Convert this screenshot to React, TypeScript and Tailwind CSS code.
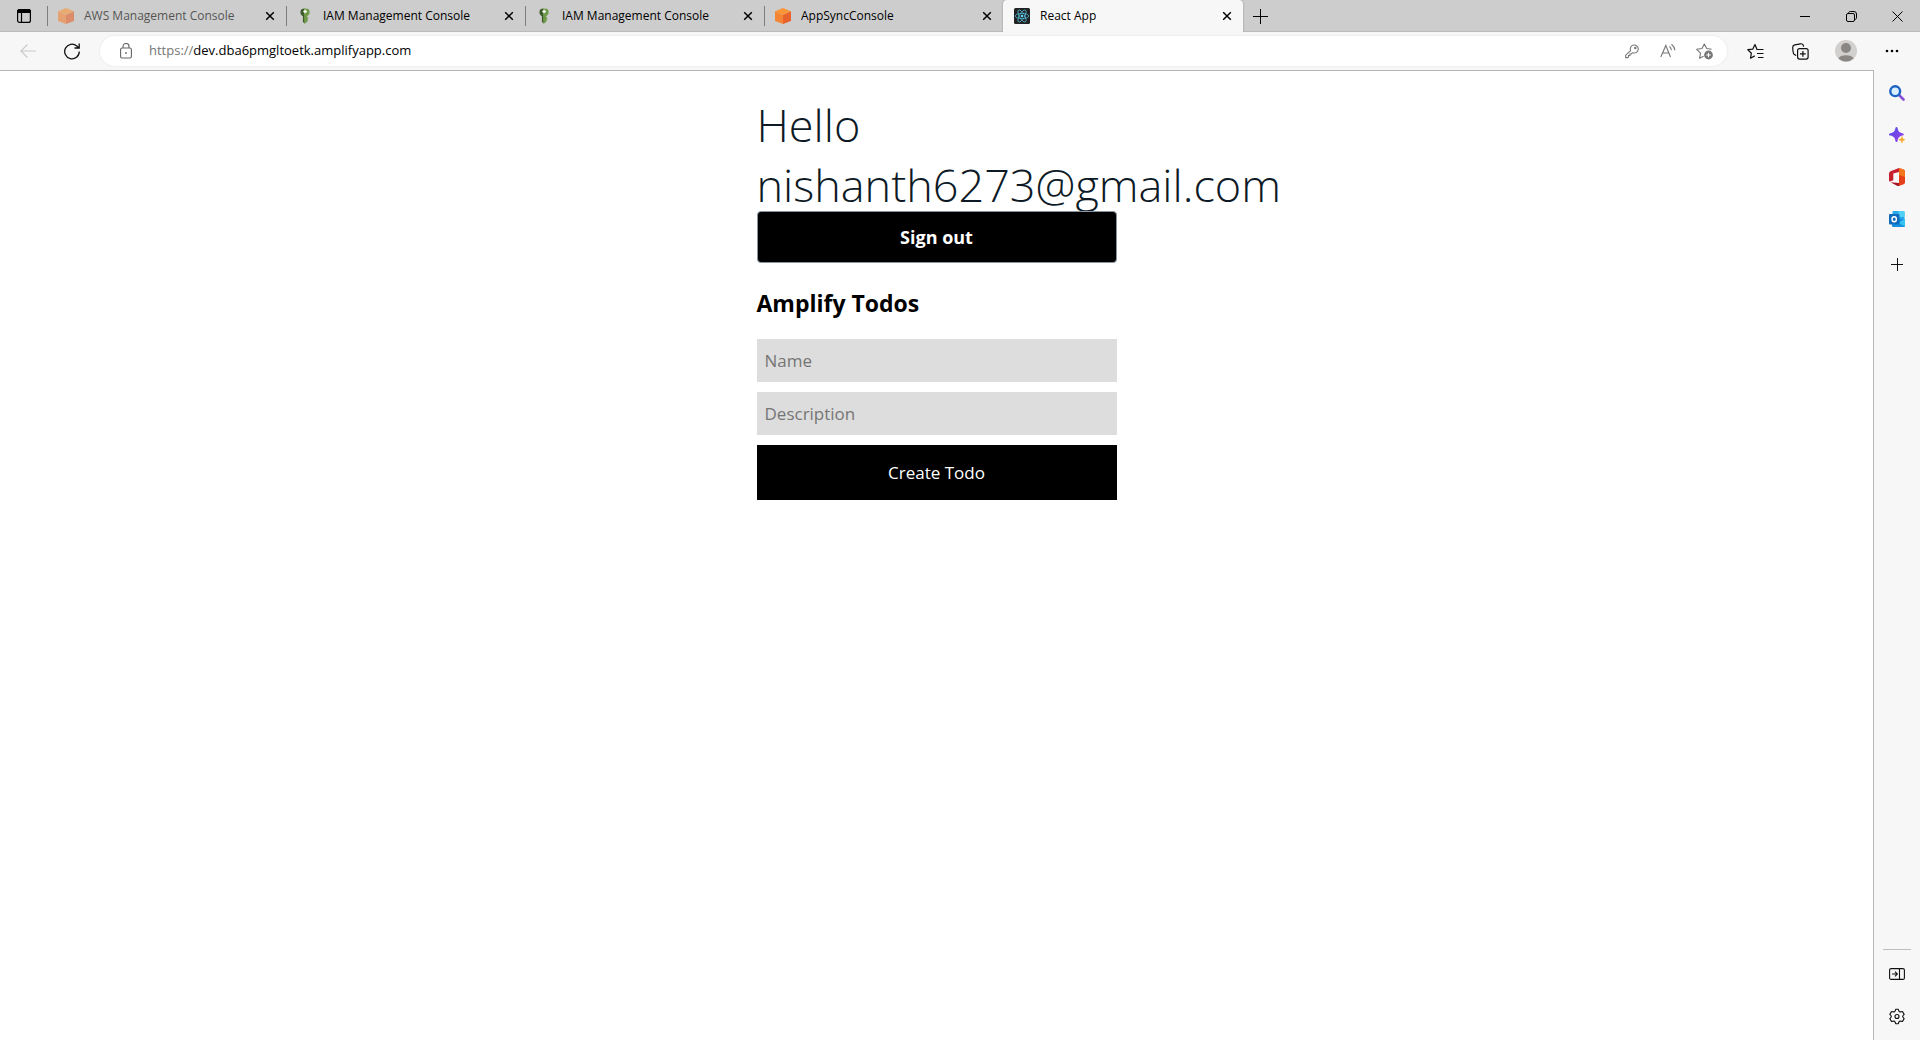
import React, { ReactNode } from "react";

function CloseGlyph() {
  return (
    <svg width="10" height="10" viewBox="0 0 10 10" stroke="#000" strokeWidth="1.5" aria-hidden="true">
      <path d="M1.2 1.2l7.6 7.6M8.8 1.2L1.2 8.8" />
    </svg>
  );
}

function CubeIcon() {
  return (
    <svg width="16" height="16" viewBox="0 0 16 16" aria-hidden="true">
      <path d="M8 0l8 3.2L8 7 0 3.2z" fill="#fa9638" />
      <path d="M0 3.2L8 7v9L0 13z" fill="#f58536" />
      <path d="M16 3.2L8 7v9l8-3z" fill="#e8622b" />
    </svg>
  );
}

function KeyIcon() {
  return (
    <svg width="16" height="16" viewBox="0 0 16 16" aria-hidden="true">
      <path d="M7.500.5L4.700 1 3.500 3v2.600L4.700 7.500l1.200.4V14l2 1.500z" fill="#3c5a28" />
      <path d="M7 .5L11 .8 12.500 2.500v3.200L11.100 7.500l-.8.4v1.300l1.300 1-1.200 1 .8 1.100-1 1L10 14l-2 1.600H7.300V7z" fill="#6f9a48" />
      <path d="M6.300 3.500h3.600M8.100 1.700v3.600" stroke="#fff" strokeWidth="1.300" />
    </svg>
  );
}

function ReactIcon() {
  return (
    <svg width="16" height="16" viewBox="0 0 16 16" fill="none" stroke="#53b5cf" strokeWidth=".8" aria-hidden="true">
      <rect width="16" height="16" rx="1.500" fill="#222" stroke="none" />
      <ellipse cx="8" cy="8" rx="6.800" ry="2.600" />
      <ellipse cx="8" cy="8" rx="6.800" ry="2.600" transform="rotate(60 8 8)" />
      <ellipse cx="8" cy="8" rx="6.800" ry="2.600" transform="rotate(120 8 8)" />
      <circle cx="8" cy="8" r="1.300" fill="#61dafb" stroke="none" />
    </svg>
  );
}

type TabProps = { title: string; icon: ReactNode; active?: boolean; faded?: boolean };

function Tab({ title, icon, active, faded }: TabProps) {
  return (
    <div
      className={
        active
          ? "flex h-8 max-w-60 flex-1 items-center rounded-t bg-[#f7f7f7] pr-2 pl-[11px] shadow-[0_0_2px_rgba(0,0,0,0.35)]"
          : "flex h-5 max-w-[239px] flex-1 items-center border-l border-[#7d7d7d] pr-2 pl-2.5"
      }
    >
      <button className={faded ? "flex min-w-0 flex-1 items-center gap-2.5 text-left opacity-60" : "flex min-w-0 flex-1 items-center gap-2.5 text-left"}>
        {icon}
        <span className="truncate text-xs">{title}</span>
      </button>
      <button aria-label={"Close " + title} className="flex size-4 items-center justify-center">
        <CloseGlyph />
      </button>
    </div>
  );
}

function TabBar() {
  return (
    <div className="flex h-8 items-center bg-[#cdcdcd] shadow-[inset_0_-1px_0_#bababa]">
      <button aria-label="Tab actions" className="flex w-[47px] justify-center">
        <svg width="16" height="16" viewBox="0 0 16 16" fill="none" stroke="#000" strokeWidth="1.200" aria-hidden="true">
          <rect x="1.600" y="1.600" width="12.800" height="12.800" rx="2" />
          <path d="M1.600 3.500a2 2 0 0 1 2-2h8.800a2 2 0 0 1 2 2V4.500H1.600z" fill="#000" />
          <path d="M5.500 5v9.400" />
        </svg>
      </button>
      <Tab title="AWS Management Console" icon={<CubeIcon />} faded />
      <Tab title="IAM Management Console" icon={<KeyIcon />} />
      <Tab title="IAM Management Console" icon={<KeyIcon />} />
      <Tab title="AppSyncConsole" icon={<CubeIcon />} />
      <Tab title="React App" icon={<ReactIcon />} active />
      <button aria-label="New tab" className="ml-[9px] flex size-4 items-center justify-center">
        <svg width="15" height="15" viewBox="0 0 15 15" stroke="#000" strokeWidth="1" aria-hidden="true">
          <path d="M0 7.500h15M7.500 0v15" />
        </svg>
      </button>
      <div className="ml-auto flex">
        <button aria-label="Minimize" className="flex h-8 w-[46px] items-center justify-center">
          <svg width="10" height="11" viewBox="0 0 10 11" stroke="#000" aria-hidden="true"><path d="M0 5.500h10" /></svg>
        </button>
        <button aria-label="Restore" className="flex h-8 w-[46px] items-center justify-center">
          <svg width="11" height="11" viewBox="0 0 11 11" fill="none" stroke="#000" aria-hidden="true">
            <rect x=".5" y="2.500" width="8" height="8" rx="1.500" />
            <path d="M2.500 2.300C2.600 1 3.300.5 4.300.5H8A2.500 2.500 0 0 1 10.500 3v3.800c0 1-.6 1.600-1.800 1.700" />
          </svg>
        </button>
        <button aria-label="Close" className="flex h-8 w-[46px] items-center justify-center">
          <svg width="11" height="11" viewBox="0 0 11 11" stroke="#000" aria-hidden="true"><path d="M.5.5l10 10M10.500.5l-10 10" /></svg>
        </button>
      </div>
    </div>
  );
}

function AddressBar() {
  return (
    <div className="flex h-[38px] items-center bg-[#f7f7f7]">
      <button aria-label="Back" disabled className="ml-5 flex size-4 items-center justify-center">
        <svg width="16" height="14" viewBox="0 0 16 14" fill="none" stroke="#cacaca" strokeWidth="1.100" aria-hidden="true">
          <path d="M16 7H.8M7.500.5L.8 7l6.700 6.500" />
        </svg>
      </button>
      <button aria-label="Refresh" className="ml-7 flex size-4 items-center justify-center">
        <svg width="16" height="17" viewBox="0 0 16 17" fill="none" stroke="#111" strokeWidth="1.300" aria-hidden="true">
          <path d="M15.300 8.500A7.300 7.300 0 1 1 12.800 3L15 5M15.200.5V5h-4.700" />
        </svg>
      </button>
      <div className="ml-5 flex h-[30px] flex-1 items-center rounded-full bg-white pr-3.5 pl-5 shadow-[0_0_3px_rgba(0,0,0,0.08)]">
        <svg width="12" height="16" viewBox="0 0 12 16" fill="none" stroke="#666" strokeWidth="1.100" aria-hidden="true">
          <rect x=".6" y="5" width="10.800" height="10" rx="1.500" />
          <path d="M3 5V3.500a3 3 0 0 1 6 0V5" />
          <rect x="5.200" y="9.200" width="1.600" height="1.600" fill="#666" stroke="none" />
        </svg>
        <a href="https://dev.dba6pmgltoetk.amplifyapp.com" className="ml-[17px] flex-1 text-[13px] text-black">
          <span className="text-[#767676]">https://</span>dev.dba6pmgltoetk.amplifyapp.com
        </a>
        <div className="flex items-center gap-5 text-[#767676]">
          <button aria-label="Saved passwords">
            <svg width="16" height="16" viewBox="0 0 16 16" fill="none" stroke="currentColor" strokeWidth="1.100" aria-hidden="true">
              <path d="M6.600 7.600A4 4 0 1 1 9 9.800l-.9.100-.8 1.100H6v1.500H4.600V14l-1 .6H1.700v-2.400z" />
              <circle cx="11.300" cy="5" r=".7" />
            </svg>
          </button>
          <button aria-label="Read aloud">
            <svg width="16" height="16" viewBox="0 0 16 16" fill="none" stroke="currentColor" strokeWidth="1.100" aria-hidden="true">
              <path d="M.8 14L5.800 2.500 10.500 14M2.500 10h6.300M9.500 3.300a6 6 0 0 1 1.900 4M11.500 1.300a9 9 0 0 1 3.400 6" />
            </svg>
          </button>
          <button aria-label="Add to favorites">
            <svg width="17" height="17" viewBox="0 0 17 17" fill="none" stroke="currentColor" strokeWidth="1.100" strokeLinejoin="round" aria-hidden="true">
              <path d="M15.600 6.300l-4.900-.8L8.300 1 6 5.500l-5.300.8 3.800 3.800-.9 5.200 4-2" />
              <circle cx="12.500" cy="12" r="4.400" fill="currentColor" stroke="none" />
              <path d="M12.500 9.700v4.600M10.200 12h4.600" stroke="#fff" />
            </svg>
          </button>
        </div>
      </div>
      <button aria-label="Favorites" className="ml-5">
        <svg width="17" height="17" viewBox="0 0 17 17" fill="none" stroke="#111" strokeWidth="1.200" strokeLinejoin="round" aria-hidden="true">
          <path d="M16.500 6.500H10L8 1.500 5.700 6.200.8 6.700l3.600 3.500-.9 5 4.200-2.300M10 10.500h6.500M11 14.500h5.500" />
        </svg>
      </button>
      <button aria-label="Collections" className="ml-7">
        <svg width="17" height="17" viewBox="0 0 17 17" fill="none" stroke="#111" strokeWidth="1.200" aria-hidden="true">
          <rect x="5.600" y="5.600" width="10.500" height="10.500" rx="2" />
          <path d="M10.900 8v5.700M8 10.900h5.700M4.200 12.500L2 11.200C1.200 10.500.8 7 .7 4.500c0-1.500.7-2.300 2-2.600L8.500.8c1.500-.2 2.400.4 2.800 1.500l.3 1.300" />
        </svg>
      </button>
      <button aria-label="Profile" className="ml-[26px]">
        <svg width="22" height="22" viewBox="0 0 22 22" aria-hidden="true">
          <circle cx="11" cy="11" r="11" fill="#d2d0ce" />
          <circle cx="11" cy="8" r="5" fill="#8a8684" />
          <path d="M3.500 18.500a7.800 4.500 0 0 1 15 0 11 11 0 0 1-15 0z" fill="#8a8684" />
        </svg>
      </button>
      <button aria-label="Settings and more" className="mr-[21px] ml-7">
        <svg width="14" height="4" viewBox="0 0 14 4" aria-hidden="true">
          <circle cx="2" cy="2" r="1.300" /><circle cx="7" cy="2" r="1.300" /><circle cx="12" cy="2" r="1.300" />
        </svg>
      </button>
    </div>
  );
}

function Sidebar() {
  return (
    <aside className="flex w-[46px] flex-col items-center bg-[#f7f7f7] pt-[15px] pb-[15px]">
      <div className="flex flex-col items-center gap-[26px]">
        <button aria-label="Search">
          <svg width="16" height="16" viewBox="0 0 16 16" fill="none" aria-hidden="true">
            <path d="M10.500 10.500l4 4" stroke="#8a4fd8" strokeWidth="2.600" strokeLinecap="round" />
            <circle cx="6.200" cy="6.200" r="4.900" fill="#d9efff" stroke="#1b62c4" strokeWidth="2.400" />
          </svg>
        </button>
        <button aria-label="Discover">
          <svg width="16" height="16" viewBox="0 0 16 16" aria-hidden="true">
            <defs><linearGradient id="spark" x1="0" y1="0" x2="1" y2="1"><stop stopColor="#4a50f0" /><stop offset="1" stopColor="#a43be0" /></linearGradient></defs>
            <path d="M7.500 0c.6 0 .9.400 1.100 1.200.7 3.200 1.600 4.200 4.800 5 .9.200 1.300.6 1.300 1.200s-.4.900-1.300 1.100c-3.200.9-4.100 1.900-4.800 5.200-.2.900-.5 1.300-1.100 1.300s-.9-.4-1.100-1.300c-.7-3.300-1.700-4.300-5-5.200C.4 8.300 0 8 0 7.400s.4-1 1.400-1.200c3.300-.8 4.300-1.800 5-5C6.600.4 6.900 0 7.500 0z" fill="url(#spark)" />
            <path d="M13 9.500c.4 2.200.9 2.700 3 3.200-2.100.5-2.600 1.100-3 3.300-.5-2.200-1-2.800-3.200-3.300 2.200-.5 2.700-1 3.200-3.200z" fill="#f5aa28" stroke="#f5aa28" strokeWidth=".6" />
          </svg>
        </button>
        <button aria-label="Office">
          <svg width="16" height="18" viewBox="0 0 16 18" className="-my-px" aria-hidden="true">
            <path d="M10 0L1.500 3.300Q0 4 0 5.500v7q0 .8 1 1l3.300-1.200V5.500L10 4z" fill="#c81f2e" />
            <path d="M10 0l4.600 1.600Q16 2 16 3.500v11q0 1.300-1.300 1.800L10 18z" fill="#e5401a" />
            <path d="M10 0l4.600 1.600Q16 2 16 3.500V9L10 7z" fill="#f5761c" />
            <path d="M1.500 14.300L10 15v3L8.500 18z" fill="#a81522" />
          </svg>
        </button>
        <button aria-label="Outlook">
          <svg width="16" height="16" viewBox="0 0 16 16" aria-hidden="true">
            <rect x="3.500" width="12" height="12" rx="1" fill="#28a8ea" />
            <path d="M9.500 0h5q1 0 1 1v5h-6z" fill="#50d0f5" />
            <path d="M3 8h12.500L16 15q0 1-1 1H4q-1 0-1-1z" fill="#1490df" />
            <path d="M16 7.500v8L9.500 12z" fill="#36c2f2" />
            <rect y="3" width="10.500" height="10.500" rx="1" fill="#0f6cbd" />
            <ellipse cx="5.200" cy="8.200" rx="2.200" ry="2.500" fill="none" stroke="#fff" strokeWidth="1.400" />
          </svg>
        </button>
      </div>
      <button aria-label="Add" className="mt-[31px]">
        <svg width="12" height="13" viewBox="0 0 12 13" stroke="#111" aria-hidden="true"><path d="M0 6.500h12M6.500 0v13" /></svg>
      </button>
      <div className="mt-auto flex flex-col items-center">
        <div className="mb-4 h-px w-7 bg-[#bdbdbd]" />
        <button aria-label="Hide sidebar">
          <svg width="16" height="16" viewBox="0 0 16 16" fill="none" stroke="#111" strokeWidth="1.100" aria-hidden="true">
            <rect x=".6" y="2.600" width="14.800" height="10.800" rx="1.500" />
            <path d="M10.500 2.600v10.800M3 8h5M6 5.700L8.300 8 6 10.300" />
          </svg>
        </button>
        <button aria-label="Settings" className="mt-[26px]">
          <svg width="16" height="17" viewBox="0 0 24 24" fill="none" stroke="#111" strokeWidth="1.700" strokeLinejoin="round" aria-hidden="true">
            <path d="M10 1.200h4q.8 2.900 1.700 3.600 1.200.7 4.500-.2l2.500 4.200Q20.500 11 20.500 12t2.200 3.200l-2.500 4.200q-3.300-.9-4.500-.2-.9.700-1.700 3.600h-4q-.8-2.900-1.700-3.600-1.200-.7-4.500.2l-2.500-4.200Q3.500 13 3.500 12T1.300 8.800l2.500-4.200q3.300.9 4.500.2.900-.7 1.700-3.600z" />
            <circle cx="12" cy="12" r="3" />
          </svg>
        </button>
      </div>
    </aside>
  );
}

function TodoPage() {
  return (
    <main className="min-w-0 flex-1 border-t border-r border-[#b5b5b5] bg-white pt-6">
      <div className="mx-auto flex w-90 flex-col">
        <h1 className="-mb-1 text-[45px] leading-[60px] font-light text-[#0d1a26]">Hello nishanth6273@gmail.com</h1>
        <button className="relative h-[52px] rounded border border-[#89949f] bg-black text-lg font-bold text-white">Sign out</button>
        <h2 className="mt-5 text-[23px] leading-10 font-bold">Amplify Todos</h2>
        <form className="mt-4 flex flex-col gap-2.5" onSubmit={(e) => e.preventDefault()}>
          <input aria-label="Name" placeholder="Name" className="h-[43px] bg-[#ddd] px-2 text-[17px] placeholder:text-[#757575]" />
          <input aria-label="Description" placeholder="Description" className="h-[43px] bg-[#ddd] px-2 text-[17px] placeholder:text-[#757575]" />
          <button className="h-[55px] bg-black text-[17px] text-white">Create Todo</button>
        </form>
      </div>
    </main>
  );
}

export default function App() {
  return (
    <div className="flex min-h-screen flex-col bg-[#f7f7f7] font-['Open_Sans','Noto_Sans',sans-serif] text-black">
      <TabBar />
      <AddressBar />
      <div className="flex flex-1">
        <TodoPage />
        <Sidebar />
      </div>
    </div>
  );
}
